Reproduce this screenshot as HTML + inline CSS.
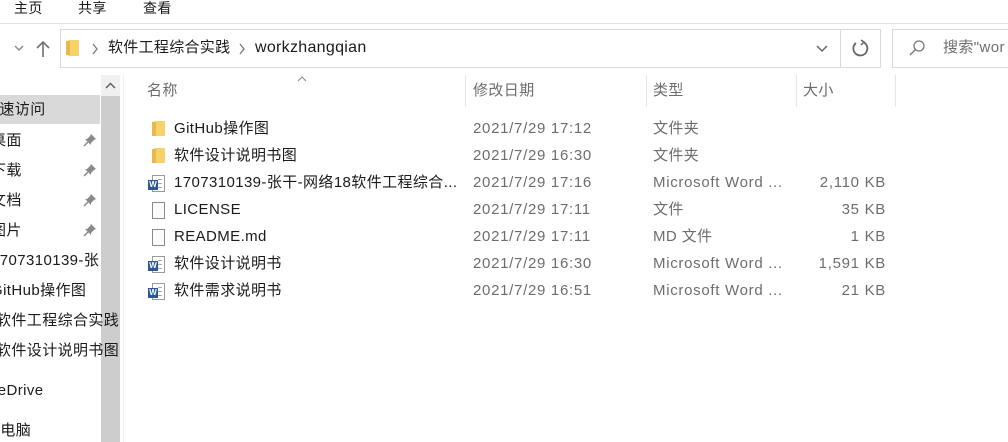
<!DOCTYPE html>
<html><head><meta charset="utf-8"><style>
*{margin:0;padding:0;box-sizing:border-box}
body{width:1008px;height:442px;overflow:hidden;background:#fff;font-family:"Liberation Sans","Noto Sans CJK SC",sans-serif;font-size:15px;letter-spacing:0.4px;color:#1a1a1a;position:relative}
.a{position:absolute;white-space:nowrap;line-height:20px}
.g{color:#6d6d6d}
.fold{position:absolute;width:11px;height:15px;background:#f7d26a;border-radius:1px}
.fold:before{content:"";position:absolute;left:-2px;top:1px;width:4px;height:14px;background:#e8b84a}
.file{position:absolute;width:13px;height:17px;border:1px solid #8a8a8a;background:#fbfbfb}
.word{position:absolute;width:18px;height:17px}
.word .pg{position:absolute;left:4px;top:0;width:13px;height:17px;border:1px solid #9a9a9a;background:#fff}
.word .pg i{display:block;height:1px;background:#aaa;margin:3px 2px 0 5px}
.word .w{position:absolute;left:0;top:5px;width:10px;height:10px;background:#2b5797;color:#fff;font-size:8px;line-height:10px;text-align:center;font-weight:bold;letter-spacing:0}
.pin{position:absolute;left:83px}
.d{letter-spacing:0.7px}
</style></head><body>
<div class="a" style="left:14px;top:-2px;font-size:14px">主页</div>
<div class="a" style="left:78px;top:-2px;font-size:14px">共享</div>
<div class="a" style="left:143px;top:-2px;font-size:14px">查看</div>
<div class="a" style="left:0;top:23px;width:1008px;height:1px;background:#e5e5e5"></div>
<svg class="a" style="left:14px;top:45px" width="10" height="7"><path d="M1 1L5 5L9 1" stroke="#888" stroke-width="1.4" fill="none"/></svg>
<svg class="a" style="left:36px;top:40px" width="14" height="18"><path d="M7 2V17M1 8L7 2L13 8" stroke="#707070" stroke-width="1.6" fill="none"/></svg>
<div class="a" style="left:60px;top:29px;width:821px;height:39px;border:1px solid #d9d9d9"></div>
<div class="a" style="left:840px;top:29px;width:1px;height:39px;background:#d9d9d9"></div>
<div class="fold" style="left:68px;top:40px;height:16px"></div>
<svg class="a" style="left:91px;top:43px" width="8" height="12"><path d="M2 1L6 6L2 11" stroke="#777" stroke-width="1.3" fill="none"/></svg>
<div class="a" style="left:108px;top:38px;letter-spacing:0.3px">软件工程综合实践</div>
<svg class="a" style="left:238px;top:43px" width="8" height="12"><path d="M2 1L6 6L2 11" stroke="#777" stroke-width="1.3" fill="none"/></svg>
<div class="a" style="left:255px;top:38px;font-size:16px;letter-spacing:0.3px">workzhangqian</div>
<svg class="a" style="left:816px;top:45px" width="12" height="8"><path d="M1 1L6 6L11 1" stroke="#666" stroke-width="1.5" fill="none"/></svg>
<svg class="a" style="left:851px;top:39px" width="18" height="18"><path d="M12 3A7 7 0 1 1 5 4" stroke="#666" stroke-width="1.8" fill="none"/><path d="M10 1L13 3L10 6" stroke="#666" stroke-width="1.5" fill="none"/></svg>
<div class="a" style="left:892px;top:29px;width:130px;height:39px;border:1px solid #d9d9d9"></div>
<svg class="a" style="left:908px;top:39px" width="18" height="18"><circle cx="11" cy="7" r="5" stroke="#777" stroke-width="1.3" fill="none"/><path d="M7 11L2 16" stroke="#777" stroke-width="1.4"/></svg>
<div class="a g" style="left:943px;top:38px">搜索"wor</div>
<!-- sidebar -->
<div class="a" style="left:0;top:95px;width:100px;height:29px;background:#d9d9d9"></div>
<div class="a" style="left:101px;top:75px;width:19px;height:367px;background:#cdcdcd"></div>
<div class="a" style="left:101px;top:75px;width:19px;height:21px;background:#f0f0f0"></div>
<svg class="a" style="left:105px;top:82px" width="11" height="7"><path d="M1 6L5.5 1.5L10 6" stroke="#606060" stroke-width="1.5" fill="none"/></svg>
<div class="a" style="left:123px;top:75px;width:1px;height:367px;background:#f0f0f0"></div>
<div class="a" style="left:-16px;top:100px">快速访问</div>
<div class="a" style="left:-9px;top:131px">桌面</div>
<div class="a" style="left:-9px;top:161px">下载</div>
<div class="a" style="left:-9px;top:191px">文档</div>
<div class="a" style="left:-9px;top:221px">图片</div>
<svg class="pin" style="top:133px" width="14" height="14"><path d="M8 1L13 6L11 7L8 10L8 12L2 6L4 6L7 3Z" fill="#8a8a8a"/><path d="M5 9L1 13" stroke="#8a8a8a" stroke-width="1.5"/></svg>
<svg class="pin" style="top:163px" width="14" height="14"><path d="M8 1L13 6L11 7L8 10L8 12L2 6L4 6L7 3Z" fill="#8a8a8a"/><path d="M5 9L1 13" stroke="#8a8a8a" stroke-width="1.5"/></svg>
<svg class="pin" style="top:193px" width="14" height="14"><path d="M8 1L13 6L11 7L8 10L8 12L2 6L4 6L7 3Z" fill="#8a8a8a"/><path d="M5 9L1 13" stroke="#8a8a8a" stroke-width="1.5"/></svg>
<svg class="pin" style="top:223px" width="14" height="14"><path d="M8 1L13 6L11 7L8 10L8 12L2 6L4 6L7 3Z" fill="#8a8a8a"/><path d="M5 9L1 13" stroke="#8a8a8a" stroke-width="1.5"/></svg>
<div class="a" style="left:-9px;top:251px">1707310139-张</div>
<div class="a" style="left:-9px;top:281px">GitHub操作图</div>
<div class="a" style="left:-4px;top:311px">软件工程综合实践</div>
<div class="a" style="left:-4px;top:341px">软件设计说明书图</div>
<div class="a" style="left:-23px;top:381px">OneDrive</div>
<div class="a" style="left:-15px;top:421px">此电脑</div>
<!-- headers -->
<svg class="a" style="left:297px;top:76px" width="10" height="6"><path d="M1 5L5 1L9 5" stroke="#888" stroke-width="1" fill="none"/></svg>
<div class="a g" style="left:147px;top:81px">名称</div>
<div class="a" style="left:465px;top:75px;width:1px;height:32px;background:#e5e5e5"></div>
<div class="a g" style="left:473px;top:81px">修改日期</div>
<div class="a" style="left:646px;top:75px;width:1px;height:32px;background:#e5e5e5"></div>
<div class="a g" style="left:653px;top:81px">类型</div>
<div class="a" style="left:796px;top:75px;width:1px;height:32px;background:#e5e5e5"></div>
<div class="a g" style="left:803px;top:81px">大小</div>
<div class="a" style="left:895px;top:75px;width:1px;height:32px;background:#e5e5e5"></div>
<!-- rows -->
<div class="fold" style="left:154px;top:121px"></div>
<div class="a" style="left:174px;top:119px">GitHub操作图</div><div class="a g d" style="left:473px;top:119px">2021/7/29 17:12</div><div class="a g" style="left:653px;top:119px">文件夹</div>
<div class="fold" style="left:154px;top:148px"></div>
<div class="a" style="left:174px;top:146px">软件设计说明书图</div><div class="a g d" style="left:473px;top:146px">2021/7/29 16:30</div><div class="a g" style="left:653px;top:146px">文件夹</div>
<div class="word" style="left:148px;top:175px"><div class="pg"><i></i><i></i><i></i></div><div class="w">W</div></div>
<div class="a" style="left:174px;top:173px">1707310139-张干-网络18软件工程综合...</div><div class="a g d" style="left:473px;top:173px">2021/7/29 17:16</div><div class="a g d" style="left:653px;top:173px">Microsoft Word ...</div><div class="a g d" style="right:122px;top:173px">2,110 KB</div>
<div class="file" style="left:152px;top:202px"></div>
<div class="a" style="left:174px;top:200px">LICENSE</div><div class="a g d" style="left:473px;top:200px">2021/7/29 17:11</div><div class="a g" style="left:653px;top:200px">文件</div><div class="a g d" style="right:122px;top:200px">35 KB</div>
<div class="file" style="left:152px;top:229px"></div>
<div class="a" style="left:174px;top:227px">README.md</div><div class="a g d" style="left:473px;top:227px">2021/7/29 17:11</div><div class="a g" style="left:653px;top:227px">MD 文件</div><div class="a g d" style="right:122px;top:227px">1 KB</div>
<div class="word" style="left:148px;top:256px"><div class="pg"><i></i><i></i><i></i></div><div class="w">W</div></div>
<div class="a" style="left:174px;top:254px">软件设计说明书</div><div class="a g d" style="left:473px;top:254px">2021/7/29 16:30</div><div class="a g d" style="left:653px;top:254px">Microsoft Word ...</div><div class="a g d" style="right:122px;top:254px">1,591 KB</div>
<div class="word" style="left:148px;top:283px"><div class="pg"><i></i><i></i><i></i></div><div class="w">W</div></div>
<div class="a" style="left:174px;top:281px">软件需求说明书</div><div class="a g d" style="left:473px;top:281px">2021/7/29 16:51</div><div class="a g d" style="left:653px;top:281px">Microsoft Word ...</div><div class="a g d" style="right:122px;top:281px">21 KB</div>
</body></html>
